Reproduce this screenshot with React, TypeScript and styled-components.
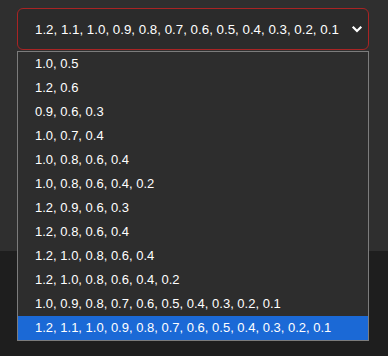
import React from "react";
import styled, { createGlobalStyle } from "styled-components";

const Global = createGlobalStyle`
  html, body { margin: 0; padding: 0; background: #1e1e1e; }
  body { font-family: "Liberation Sans", Arial, sans-serif; }
`;

const Page = styled.div`
  min-height: 356px;
  display: flex;
  flex-direction: column;
  background: #1e1e1e;
`;

const Panel = styled.div`
  height: 251px;
  flex: none;
  background: #2f2f2f;
  padding: 8px 19px 0 17px;
  box-sizing: border-box;
  position: relative;
  z-index: 2;
`;

const Footer = styled.div`
  flex: 1;
  background: #1e1e1e;
`;

const SelectWrap = styled.div`
  position: relative;
`;

const SelectBox = styled.div`
  height: 42px;
  box-sizing: border-box;
  border: 1px solid #a92424;
  border-radius: 6px;
  background: #2b2b2b;
  display: flex;
  align-items: center;
  justify-content: space-between;
  padding: 0 5px 0 17px;
  color: #ffffff;
  font-size: 13.33px;
`;

const Chevron = styled.svg`
  width: 12px;
  height: 12px;
  display: block;
`;

const Menu = styled.ul`
  position: absolute;
  top: 43px;
  left: 0;
  width: 352px;
  box-sizing: border-box;
  margin: 0;
  padding: 0;
  list-style: none;
  border: 1px solid #7c7c7c;
  background: #2d2d2d;
  z-index: 3;
`;

const Option = styled.li<{ $selected?: boolean }>`
  height: 24px;
  line-height: 24px;
  padding-left: 17px;
  font-size: 13px;
  color: #ffffff;
  background: ${(p) => (p.$selected ? "#1b69d6" : "transparent")};
  white-space: nowrap;
`;

const options = [
  "1.0, 0.5",
  "1.2, 0.6",
  "0.9, 0.6, 0.3",
  "1.0, 0.7, 0.4",
  "1.0, 0.8, 0.6, 0.4",
  "1.0, 0.8, 0.6, 0.4, 0.2",
  "1.2, 0.9, 0.6, 0.3",
  "1.2, 0.8, 0.6, 0.4",
  "1.2, 1.0, 0.8, 0.6, 0.4",
  "1.2, 1.0, 0.8, 0.6, 0.4, 0.2",
  "1.0, 0.9, 0.8, 0.7, 0.6, 0.5, 0.4, 0.3, 0.2, 0.1",
  "1.2, 1.1, 1.0, 0.9, 0.8, 0.7, 0.6, 0.5, 0.4, 0.3, 0.2, 0.1",
];

const selected = options.length - 1;

export default function App() {
  return (
    <>
      <Global />
      <Page>
        <Panel>
          <SelectWrap>
            <SelectBox>
              <span>{options[selected]}</span>
              <Chevron viewBox="0 0 12 12">
                <path d="M2.5 4.5 L6 8 L9.5 4.5" fill="none" stroke="#ffffff" strokeWidth="2.2" strokeLinecap="square" strokeLinejoin="miter" />
              </Chevron>
            </SelectBox>
            <Menu>
              {options.map((o, i) => (
                <Option key={o} $selected={i === selected}>
                  {o}
                </Option>
              ))}
            </Menu>
          </SelectWrap>
        </Panel>
        <Footer />
      </Page>
    </>
  );
}
